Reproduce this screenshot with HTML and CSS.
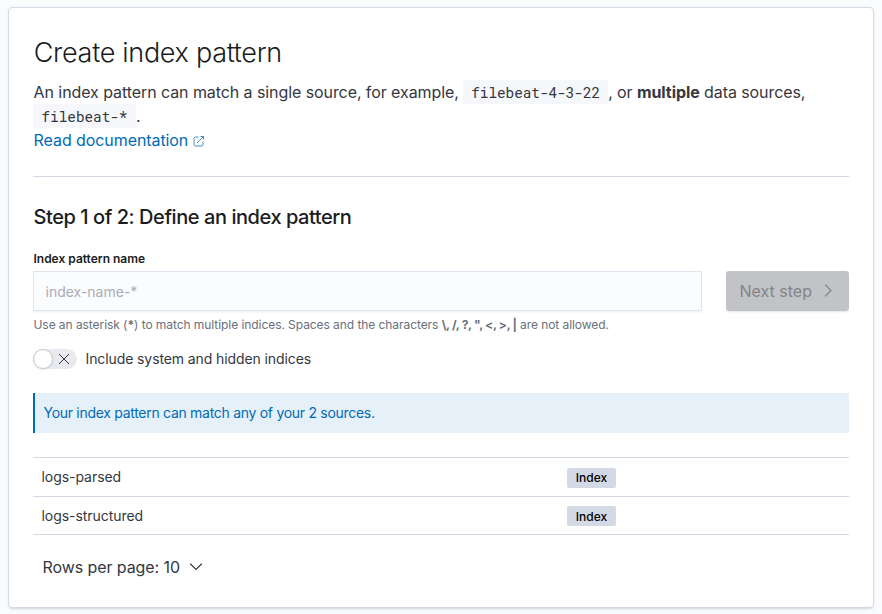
FILE: index.html
```html
<!DOCTYPE html>
<html lang="en">
<head>
<meta charset="utf-8">
<title>Create index pattern</title>
<link rel="stylesheet" href="styles.css">
</head>
<body>
<main class="panel">
  <h1 class="title">Create index pattern</h1>
  <p class="intro">An index pattern can match a single source, for example, <code>filebeat-4-3-22</code>, or <strong>multiple</strong> data sources, <code class="second">filebeat-*</code>.<br><a class="link">Read documentation <svg width="12" height="12" viewBox="0 0 12 12" fill="none" stroke="currentColor" stroke-width=".75"><path d="M5.500 2H2.500Q1 2 1 3.500V9.500Q1 11 2.500 11H8.500Q10 11 10 9.500V6.500M4 8L10.500 1.500M7.500 1.500H10.500V4.500"/></svg></a></p>
  <hr class="rule">
  <h2 class="step">Step 1 of 2: Define an index pattern</h2>
  <div class="form">
    <div class="field">
      <label class="label" for="name">Index pattern name</label>
      <input class="input" id="name" placeholder="index-name-*">
    </div>
    <button class="next"><span>Next step</span><svg width="16" height="16" viewBox="0 0 16 16" fill="none" stroke="currentColor" stroke-width="1.1" stroke-linecap="round"><path d="M5.500 2L11 7.500L5.500 13"/></svg></button>
  </div>
  <p class="help">Use an asterisk (<strong>*</strong>) to match multiple indices. Spaces and the characters <strong class="chars">\, /, ?, ", &lt;, &gt;, |</strong> are not allowed.</p>
  <div class="toggle"><span class="switch"><span class="thumb"></span><svg width="12" height="12" viewBox="0 0 12 12" fill="none" stroke="currentColor"><path d="M1 1L11 11M11 1L1 11"/></svg></span><span>Include system and hidden indices</span></div>
  <div class="callout">Your index pattern can match any of your 2 sources.</div>
  <div class="table">
    <div class="row"><span>logs-parsed</span><span class="badge">Index</span></div>
    <div class="row"><span>logs-structured</span><span class="badge">Index</span></div>
  </div>
  <div class="pager"><span>Rows per page: 10</span><svg width="14" height="14" viewBox="0 0 14 14" fill="none" stroke="currentColor" stroke-width="1.1" stroke-linecap="round"><path d="M1.500 4L7 9.500L12.500 4"/></svg></div>
</main>
</body>
</html>
```
FILE: styles.css
```css
* { box-sizing: border-box; }
body { margin: 0; height: 614px; padding: 7px 8px 6px; background: #fafbfd; font-family: Inter, sans-serif; font-size: 14px; color: #343741; overflow: hidden; }
.panel { height: 601px; padding: 24px; background: #fff; border: 1px solid #d3dae6; border-radius: 4px; box-shadow: 0 2px 2px -1px rgba(152,162,179,.3), 0 1px 5px -2px rgba(152,162,179,.3); }
.title { margin: 0; height: 40px; padding-left: .7px; line-height: 41px; font-size: 27px; font-weight: 300; letter-spacing: -.3px; color: #1a1c21; }
.intro { margin: 8px 0 0; height: 72px; padding-left: .6px; font-size: 16px; line-height: 24px; letter-spacing: -.08px; }
code { display: inline-block; vertical-align: top; height: 24px; padding: 0 8px; background: #f5f7fa; font: 14.4px/25px "Roboto Mono", "DejaVu Sans Mono", monospace; letter-spacing: -.04px; }
.second { margin-left: -.6px; padding: 0 8.5px; }
.link { color: #006bb4; }
.link svg { margin-left: .5px; vertical-align: -1px; }
.rule { margin: 24px 0 0; height: 1px; border: 0; background: #d3dae6; }
.step { margin: 24px 0 0; height: 32px; padding-left: .5px; line-height: 32px; font-size: 20px; font-weight: 500; letter-spacing: -.44px; color: #1a1c21; }
.form { display: flex; align-items: flex-end; gap: 24px; margin-top: 17px; }
.field { flex: 1; }
.label { display: block; height: 21px; padding-left: .5px; line-height: 18px; font-size: 12px; font-weight: 600; letter-spacing: -.01px; color: #1a1c21; }
.input { display: block; width: 100%; height: 40px; padding: 0 11.5px; font: 14px Inter, sans-serif; border: 1px solid #e1e4ee; border-radius: 0; background: #fbfcfd; box-shadow: 0 2px 2px -1px rgba(152,162,179,.2); }
.input::placeholder { color: #a9adb6; }
.next { display: flex; align-items: center; justify-content: space-between; width: 123px; height: 40px; padding: 0 13px 0 13.5px; border: 0; border-radius: 3px; background: #c2c3c6; color: #838488; font: 16px Inter, sans-serif; box-shadow: 0 2px 2px -1px rgba(152,162,179,.3); }
.help { margin: 5px 0 0; height: 18px; padding-left: .5px; line-height: 18px; font-size: 12px; letter-spacing: -.065px; color: #69707d; }
.chars { letter-spacing: -.3px; }
.toggle { display: flex; align-items: center; gap: 8.5px; height: 20px; margin-top: 15px; letter-spacing: -.1px; }
.toggle > span:last-child { line-height: 18px; padding-bottom: 1px; }
.switch { display: flex; align-items: center; justify-content: space-between; width: 44px; height: 20px; padding-right: 7px; border-radius: 10px; background: #e9eaef; }
.thumb { width: 20px; height: 20px; border: 1px solid #c8cacf; border-radius: 50%; background: #fff; box-shadow: 0 1px 2px rgba(152,162,179,.25); }
.callout { height: 40px; margin-top: 24px; padding: 0 8.500px; line-height: 40px; letter-spacing: -.29px; color: #006bb4; background: #e6f0f8; border-left: 2px solid #006bb4; }
.table { margin-top: 24px; border-top: 1px solid #d3dae6; }
.row { display: grid; grid-template-columns: 525.5px 1fr; align-items: center; height: 39px; padding-left: 8.5px; border-bottom: 1px solid #d3dae6; letter-spacing: -.05px; }
.row > span:first-child { padding-bottom: 1px; }
.row:last-child { height: 38px; }
.row:last-child > span:first-child { padding-bottom: 0; }
.badge { justify-self: start; width: 49px; height: 20px; line-height: 20px; text-align: center; font-size: 12px; font-weight: 500; letter-spacing: 0; color: #000; background: #d3dae6; border-radius: 2px; }
.row:first-child .badge { position: relative; top: 1px; }
.row:last-child .badge { line-height: 21px; }
.pager { display: flex; align-items: center; gap: 9px; height: 24px; margin: 20px 0 0 9.5px; font-size: 16px; letter-spacing: -.08px; }
```
